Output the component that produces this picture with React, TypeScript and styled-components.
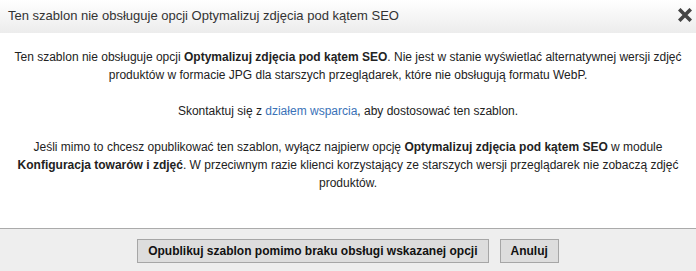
import React from "react";
import styled, { createGlobalStyle } from "styled-components";

const Global = createGlobalStyle`
  html, body { margin: 0; padding: 0; background: #fff; }
  body { font-family: "Liberation Sans", Arial, sans-serif; }
`;

const Dialog = styled.div`
  width: 696px;
  height: 271px;
  display: flex;
  flex-direction: column;
  background: #fff;
  overflow: hidden;
`;

const Header = styled.div`
  height: 33px;
  flex: none;
  display: flex;
  align-items: center;
  justify-content: space-between;
  padding: 0 3px 0 8px;
  background: linear-gradient(to bottom, #ffffff 0%, #ececec 100%);
`;

const Title = styled.div`
  font-size: 13px;
  color: #333;
  padding-bottom: 2px;
`;

const Close = styled.button`
  border: 0;
  background: transparent;
  padding: 0;
  width: 16px;
  height: 16px;
  display: flex;
  align-items: center;
  justify-content: center;
  cursor: pointer;
  margin-bottom: 3px;
`;

const Body = styled.div`
  flex: 1;
  padding: 15px 8px 0;
  text-align: center;
  font-size: 12px;
  line-height: 18px;
  color: #222;
`;

const Para = styled.p`
  margin: 0 0 18px;
`;

const Link = styled.a`
  color: #3a72b8;
  text-decoration: none;
`;

const Footer = styled.div`
  flex: none;
  border-top: 1px solid #aaa;
  background: #eeeeee;
  display: flex;
  justify-content: center;
  align-items: flex-start;
  gap: 11px;
  padding-top: 10px;
  box-sizing: border-box;
  height: 43px;
`;

const Button = styled.button`
  height: 24px;
  padding: 0 10px;
  font-family: "Liberation Sans", Arial, sans-serif;
  font-weight: bold;
  font-size: 12px;
  color: #111;
  background: #dddddd;
  border: 1px solid #a6a6a6;
  border-radius: 0;
  cursor: pointer;
`;

export default function App() {
  return (
    <>
      <Global />
      <Dialog>
        <Header>
          <Title>Ten szablon nie obsługuje opcji Optymalizuj zdjęcia pod kątem SEO</Title>
          <Close aria-label="Zamknij">
            <svg width="14" height="14" viewBox="0 0 14 14">
              <path d="M2.5 2.5 L11.5 11.5 M11.5 2.5 L2.5 11.5" stroke="#444" strokeWidth="3.6" strokeLinecap="square" />
            </svg>
          </Close>
        </Header>
        <Body>
          <Para>
            Ten szablon nie obsługuje opcji <b>Optymalizuj zdjęcia pod kątem SEO</b>. Nie jest w stanie wyświetlać
            alternatywnej wersji zdjęć produktów w formacie JPG dla starszych przeglądarek, które nie obsługują formatu
            WebP.
          </Para>
          <Para>
            Skontaktuj się z <Link href="#">działem wsparcia</Link>, aby dostosować ten szablon.
          </Para>
          <Para>
            Jeśli mimo to chcesz opublikować ten szablon, wyłącz najpierw opcję <b>Optymalizuj zdjęcia pod kątem SEO</b> w
            module <b>Konfiguracja towarów i zdjęć</b>. W przeciwnym razie klienci korzystający ze starszych wersji
            przeglądarek nie zobaczą zdjęć produktów.
          </Para>
        </Body>
        <Footer>
          <Button>Opublikuj szablon pomimo braku obsługi wskazanej opcji</Button>
          <Button>Anuluj</Button>
        </Footer>
      </Dialog>
    </>
  );
}
